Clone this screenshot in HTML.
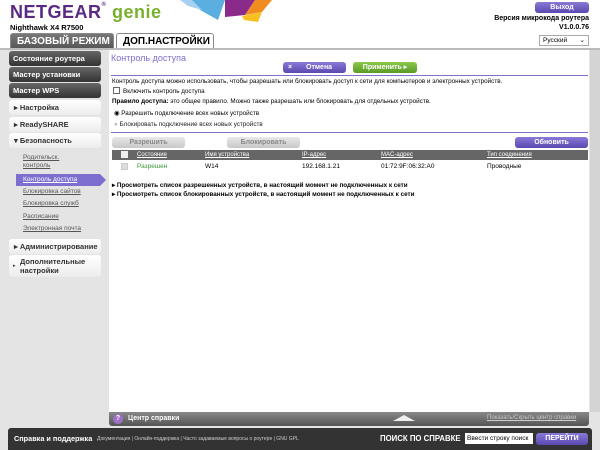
<!DOCTYPE html>
<html><head><meta charset="utf-8"><style>
*{margin:0;padding:0;box-sizing:border-box}
body{width:600px;height:450px;overflow:hidden;background:#e4e4e4;font-family:"Liberation Sans",sans-serif;position:relative;font-size:7px;color:#000}
.a{position:absolute}
.hdr{left:0;top:0;width:600px;height:48px;background:#fff}
.tab{top:33px;height:16px;border:1px solid #888;border-bottom:none;border-radius:3px 3px 0 0;font-weight:bold;font-size:10px;padding-left:6px;line-height:15px}
.db{left:9px;width:92px;height:15px;border-radius:3px;background:linear-gradient(#666,#333);color:#fff;font-weight:bold;font-size:7.5px;padding-left:4px;line-height:15px}
.lb{left:9px;width:92px;height:15px;border-radius:3px;background:linear-gradient(#fff,#ececec);color:#333;font-weight:bold;font-size:7.5px;padding-left:5px;line-height:15px}
.sl{left:23px;color:#555;text-decoration:underline;font-size:6.5px}
.btn{height:11px;border-radius:3px;color:#fff;font-weight:bold;font-size:7px;text-align:center;line-height:11px}
.pb{background:linear-gradient(#8a7ad6,#5b48b0)}
.gb{background:linear-gradient(#e8e8e8,#c8c8c8);color:#888}
.th{color:#fff;text-decoration:underline;font-size:6px;top:152px}
</style></head><body>
<div class="a hdr"></div>
<svg class="a" style="left:180px;top:0" width="100" height="22"><polygon points="10,0 45,0 38,20 20,10" fill="#5aaee0"/><polygon points="45,0 75,0 65,15 45,17" fill="#8a2a8a"/><polygon points="65,15 75,0 92,0 82,12" fill="#f08c20"/><polygon points="62,16 82,12 78,22 64,20" fill="#f8c020"/><polygon points="0,0 12,0 22,10 8,6" fill="#a8d0f0"/></svg>
<div class="a" style="left:10px;top:2px;font-size:18px;font-weight:bold;color:#5a2a82;letter-spacing:0.5px">NETGEAR<span style="font-size:6px;vertical-align:top">®</span> <span style="color:#7ab030">genie</span></div>
<div class="a" style="left:10px;top:23px;font-size:7.5px;font-weight:bold">Nighthawk X4 R7500</div>
<div class="a btn pb" style="left:535px;top:2px;width:54px">Выход</div>
<div class="a" style="right:11px;top:14px;font-size:7px;font-weight:bold;text-align:right;line-height:9px">Версия микрокода роутера<br>V1.0.0.76</div>
<div class="a" style="left:539px;top:35px;width:50px;height:11px;border:1px solid #aaa;font-size:6.5px;padding-left:3px;line-height:9px">Русский<span style="float:right;padding-right:3px">⌄</span></div>
<div class="a tab" style="left:10px;width:104px;background:linear-gradient(#777,#555);color:#fff">БАЗОВЫЙ РЕЖИМ</div>
<div class="a tab" style="left:116px;width:98px;background:#fff;color:#000">ДОП.НАСТРОЙКИ</div>
<div class="a" style="left:0;top:48px;width:600px;height:2px;background:#bbb"></div>

<div class="a db" style="top:51px">Состояние роутера</div>
<div class="a db" style="top:67px">Мастер установки</div>
<div class="a db" style="top:83px">Мастер WPS</div>
<div class="a lb" style="top:100px">▸ Настройка</div>
<div class="a lb" style="top:117px">▸ ReadySHARE</div>
<div class="a lb" style="top:133px">▾ Безопасность</div>
<div class="a sl" style="top:154px;line-height:8px">Родительск.<br>контроль</div>
<div class="a" style="left:16px;top:174px;width:84px;height:12px;background:#7d6fd0"></div>
<div class="a" style="left:100px;top:174px;border-left:6px solid #7d6fd0;border-top:6px solid transparent;border-bottom:6px solid transparent"></div>
<div class="a sl" style="top:176px;color:#fff">Контроль доступа</div>
<div class="a sl" style="top:188px">Блокировка сайтов</div>
<div class="a sl" style="top:200px">Блокировка служб</div>
<div class="a sl" style="top:213px">Расписание</div>
<div class="a sl" style="top:225px">Электронная почта</div>
<div class="a lb" style="top:239px">▸ Администрирование</div>
<div class="a lb" style="top:255px;height:22px;line-height:9px;padding-top:2px;padding-left:11px">Дополнительные<br>настройки</div>
<div class="a" style="left:13px;top:263px;font-size:5px;color:#333">▸</div>

<div class="a" style="left:109px;top:50px;width:480px;height:362px;background:#fff"></div>
<div class="a" style="left:590px;top:50px;width:10px;height:362px;background:#d4d4d4"></div>
<div class="a" style="left:111px;top:53px;font-size:9px;color:#7d6fd0">Контроль доступа</div>
<div class="a btn pb" style="left:283px;top:62px;width:63px"><span style="float:left;padding-left:5px">×</span>Отмена</div>
<div class="a btn" style="left:353px;top:62px;width:64px;background:linear-gradient(#8cc84a,#5a9a28)">Применить ▸</div>
<div class="a" style="left:111px;top:75px;width:477px;height:1px;background:#7d6fd0"></div>
<div class="a" style="left:112px;top:78px;font-size:6.3px">Контроль доступа можно использовать, чтобы разрешать или блокировать доступ к сети для компьютеров и электронных устройств.</div>
<div class="a" style="left:113px;top:87px;width:7px;height:7px;border:1px solid #666"></div>
<div class="a" style="left:123px;top:88px;font-size:6.3px">Включить контроль доступа</div>
<div class="a" style="left:112px;top:98px;font-size:6.3px"><b>Правило доступа:</b> это общее правило. Можно также разрешать или блокировать для отдельных устройств.</div>
<div class="a" style="left:114px;top:110px;font-size:6.3px">◉ Разрешить подключение всех новых устройств</div>
<div class="a" style="left:114px;top:121px;font-size:6.3px;color:#222"><span style="color:#bbb">●</span> Блокировать подключение всех новых устройств</div>
<div class="a" style="left:111px;top:132px;width:477px;height:1px;background:#7d6fd0"></div>
<div class="a btn gb" style="left:112px;top:137px;width:73px">Разрешить</div>
<div class="a btn gb" style="left:227px;top:137px;width:73px">Блокировать</div>
<div class="a btn pb" style="left:515px;top:137px;width:73px">Обновить</div>
<div class="a" style="left:112px;top:150px;width:476px;height:10px;background:#666"></div>
<div class="a" style="left:121px;top:151px;width:7px;height:7px;background:#eee"></div>
<div class="a th" style="left:137px">Состояние</div>
<div class="a th" style="left:205px">Имя устройства</div>
<div class="a th" style="left:302px">IP-адрес</div>
<div class="a th" style="left:381px">MAC-адрес</div>
<div class="a th" style="left:487px">Тип соединения</div>
<div class="a" style="left:121px;top:163px;width:7px;height:7px;background:#ddd;border:1px solid #ccc"></div>
<div class="a" style="left:137px;top:163px;font-size:6.5px;color:#3a9a3a">Разрешен</div>
<div class="a" style="left:205px;top:163px;font-size:6.5px">W14</div>
<div class="a" style="left:302px;top:163px;font-size:6.5px">192.168.1.21</div>
<div class="a" style="left:381px;top:163px;font-size:6.5px">01:72:9F:06:32:A0</div>
<div class="a" style="left:487px;top:163px;font-size:6.5px">Проводные</div>
<div class="a" style="left:112px;top:182px;font-size:6.3px;font-weight:bold">▸ Просмотреть список разрешенных устройств, в настоящий момент не подключенных к сети</div>
<div class="a" style="left:112px;top:191px;font-size:6.3px;font-weight:bold">▸ Просмотреть список блокированных устройств, в настоящий момент не подключенных к сети</div>

<div class="a" style="left:109px;top:412px;width:480px;height:14px;background:linear-gradient(#888,#555);border-radius:0 0 3px 3px"></div>
<div class="a" style="left:113px;top:414px;width:10px;height:10px;border-radius:50%;background:#a070c8;color:#fff;font-size:7px;text-align:center;line-height:10px;font-weight:bold">?</div>
<div class="a" style="left:128px;top:415px;color:#fff;font-weight:bold;font-size:7px">Центр справки</div>
<div class="a" style="left:393px;top:415px;border-bottom:6px solid #eee;border-left:11px solid transparent;border-right:11px solid transparent"></div>
<div class="a" style="left:487px;top:415px;color:#ccc;font-size:6px;text-decoration:underline">Показать/Скрыть центр справки</div>

<div class="a" style="left:8px;top:428px;width:584px;height:22px;background:#333;border-radius:3px 3px 0 0"></div>
<div class="a" style="left:14px;top:434px;color:#fff;font-weight:bold;font-size:7.3px">Справка и поддержка</div>
<div class="a" style="left:97px;top:436px;color:#ccc;font-size:5px">Документация | Онлайн-поддержка | Часто задаваемые вопросы о роутере | GNU GPL</div>
<div class="a" style="left:380px;top:434px;color:#fff;font-weight:bold;font-size:7.8px">ПОИСК ПО СПРАВКЕ</div>
<div class="a" style="left:465px;top:433px;width:68px;height:11px;background:#fff;font-size:6.5px;line-height:11px;padding-left:2px">Ввести строку поиск</div>
<div class="a btn pb" style="left:536px;top:433px;width:52px;height:12px;line-height:12px">ПЕРЕЙТИ</div>
</body></html>
